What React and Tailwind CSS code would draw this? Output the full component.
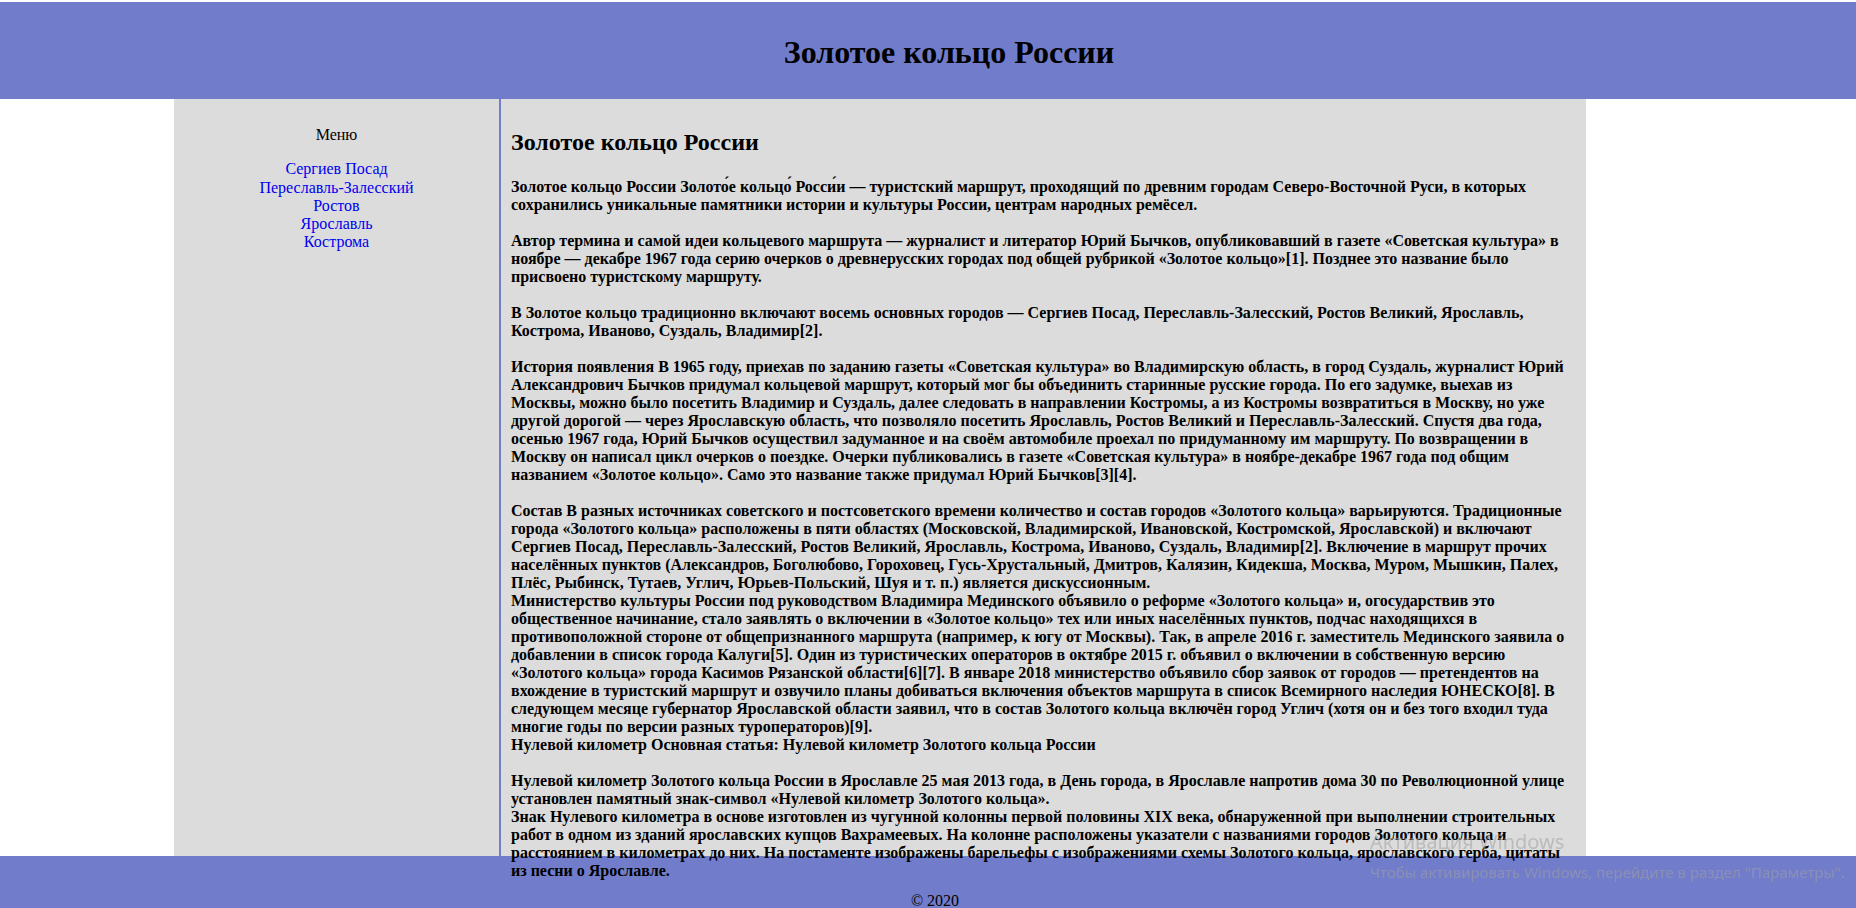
const links = ['Сергиев Посад', 'Переславль-Залесский', 'Ростов', 'Ярославль', 'Кострома']

const blocks = [
  'Золотое кольцо России Золото́е кольцо́ Росси́и — туристский маршрут, проходящий по древним городам Северо-Восточной Руси, в которых сохранились уникальные памятники истории и культуры России, центрам народных ремёсел.',
  null,
  'Автор термина и самой идеи кольцевого маршрута — журналист и литератор Юрий Бычков, опубликовавший в газете «Советская культура» в ноябре — декабре 1967 года серию очерков о древнерусских городах под общей рубрикой «Золотое кольцо»[1]. Позднее это название было присвоено туристскому маршруту.',
  null,
  'В Золотое кольцо традиционно включают восемь основных городов — Сергиев Посад, Переславль-Залесский, Ростов Великий, Ярославль, Кострома, Иваново, Суздаль, Владимир[2].',
  null,
  'История появления В 1965 году, приехав по заданию газеты «Советская культура» во Владимирскую область, в город Суздаль, журналист Юрий Александрович Бычков придумал кольцевой маршрут, который мог бы объединить старинные русские города. По его задумке, выехав из Москвы, можно было посетить Владимир и Суздаль, далее следовать в направлении Костромы, а из Костромы возвратиться в Москву, но уже другой дорогой — через Ярославскую область, что позволяло посетить Ярославль, Ростов Великий и Переславль-Залесский. Спустя два года, осенью 1967 года, Юрий Бычков осуществил задуманное и на своём автомобиле проехал по придуманному им маршруту. По возвращении в Москву он написал цикл очерков о поездке. Очерки публиковались в газете «Советская культура» в ноябре-декабре 1967 года под общим названием «Золотое кольцо». Само это название также придумал Юрий Бычков[3][4].',
  null,
  'Состав В разных источниках советского и постсоветского времени количество и состав городов «Золотого кольца» варьируются. Традиционные города «Золотого кольца» расположены в пяти областях (Московской, Владимирской, Ивановской, Костромской, Ярославской) и включают Сергиев Посад, Переславль-Залесский, Ростов Великий, Ярославль, Кострома, Иваново, Суздаль, Владимир[2]. Включение в маршрут прочих населённых пунктов (Александров, Боголюбово, Гороховец, Гусь-Хрустальный, Дмитров, Калязин, Кидекша, Москва, Муром, Мышкин, Палех, Плёс, Рыбинск, Тутаев, Углич, Юрьев-Польский, Шуя и т. п.) является дискуссионным.',
  'Министерство культуры России под руководством Владимира Мединского объявило о реформе «Золотого кольца» и, огосударствив это общественное начинание, стало заявлять о включении в «Золотое кольцо» тех или иных населённых пунктов, подчас находящихся в противоположной стороне от общепризнанного маршрута (например, к югу от Москвы). Так, в апреле 2016 г. заместитель Мединского заявила о добавлении в список города Калуги[5]. Один из туристических операторов в октябре 2015 г. объявил о включении в собственную версию «Золотого кольца» города Касимов Рязанской области[6][7]. В январе 2018 министерство объявило сбор заявок от городов — претендентов на вхождение в туристский маршрут и озвучило планы добиваться включения объектов маршрута в список Всемирного наследия ЮНЕСКО[8]. В следующем месяце губернатор Ярославской области заявил, что в состав Золотого кольца включён город Углич (хотя он и без того входил туда многие годы по версии разных туроператоров)[9].',
  'Нулевой километр Основная статья: Нулевой километр Золотого кольца России',
  null,
  'Нулевой километр Золотого кольца России в Ярославле 25 мая 2013 года, в День города, в Ярославле напротив дома 30 по Революционной улице установлен памятный знак-символ «Нулевой километр Золотого кольца».',
  'Знак Нулевого километра в основе изготовлен из чугунной колонны первой половины XIX века, обнаруженной при выполнении строительных работ в одном из зданий ярославских купцов Вахрамеевых. На колонне расположены указатели с названиями городов Золотого кольца и расстоянием в километрах до них. На постаменте изображены барельефы с изображениями схемы Золотого кольца, ярославского герба, цитаты из песни о Ярославле.',
]

function Sidebar() {
  return (
    <nav className="w-[325px] shrink-0 pt-[27px] text-center text-[16px] leading-[18.25px]">
      <p>Меню</p>
      <ul className="mt-4">
        {links.map((l) => (
          <li key={l}>
            <a href="#" className="text-[#0000ee]">{l}</a>
          </li>
        ))}
      </ul>
    </nav>
  )
}

function Article() {
  return (
    <main className="flex-1 border-l-2 border-[#717dcb] px-[10px] pt-[30px]">
      <h2 className="text-[24px] font-bold leading-[normal]">Золотое кольцо России</h2>
      <div className="mt-[22px] text-[16px] font-bold leading-[18px]">
        {blocks.map((b, i) =>
          b === null ? <br key={i} /> : <div key={i}>{b}</div>
        )}
      </div>
    </main>
  )
}

export default function App() {
  return (
    <div className="relative pt-[2px] font-['Liberation_Serif',serif] text-black bg-white">
      <header className="h-[97px] bg-[#717dcb] pt-[32px] pl-[42px] text-center">
        <h1 className="text-[32px] font-bold leading-[normal]">Золотое кольцо России</h1>
      </header>

      <div className="ml-[174px] flex h-[757px] w-[1412px] bg-[#dcdcdc]">
        <Sidebar />
        <Article />
      </div>

      <footer className="h-[52px] bg-[#717dcb] pt-[33px] pl-[14px] text-center text-[16px] leading-normal">
        © 2020
      </footer>

      {/* windows activation watermark */}
      <div className="pointer-events-none fixed left-[1370px] top-[832px] font-['Noto_Sans',sans-serif] text-[rgba(160,160,160,0.55)]">
        <div className="text-[20px] leading-[20px]">Активация Windows</div>
        <div className="mt-[13px] text-[15px] leading-[15px] whitespace-nowrap">
          Чтобы активировать Windows, перейдите в раздел "Параметры".
        </div>
      </div>
    </div>
  )
}
